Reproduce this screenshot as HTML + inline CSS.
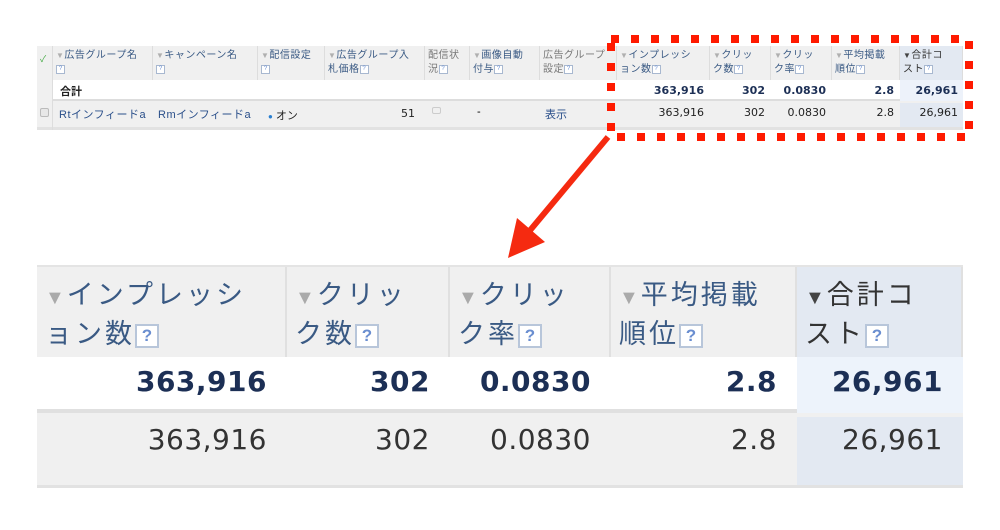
<!DOCTYPE html>
<html><head><meta charset="utf-8"><style>
*{margin:0;padding:0;box-sizing:border-box}
body{width:1000px;height:530px;background:#fff;position:relative;overflow:hidden;font-family:"Liberation Sans","Noto Sans CJK JP",sans-serif}
.a{position:absolute}
.h{background:#f0f0f0;border-right:1px solid #ddd;color:#3a5a84;font-size:10px;line-height:14px;padding:3px 3px;overflow:hidden;white-space:nowrap;letter-spacing:0.5px}
.q{display:inline-block;width:9px;height:9px;border:1px solid #a8b8d0;background:#fff;color:#6a8ed0;font-size:6px;line-height:7px;text-align:center;vertical-align:middle;letter-spacing:0}
.tri{color:#b0b0b0;font-size:8px}
.n{text-align:right;color:#222;font-family:"DejaVu Sans",sans-serif;font-size:11px}
.b{font-weight:bold;color:#1c2f55}
.H{background:#f0f0f0;border-right:2px solid #e0e0e0;color:#3a5a84;font-size:27px;line-height:36px;padding:10px 8px;letter-spacing:3px;white-space:nowrap}
.Q{display:inline-block;width:24px;height:24px;border:2px solid #b8c6da;background:#fff;color:#6a8ed0;font-size:17px;line-height:20px;text-align:center;vertical-align:middle;font-weight:bold;letter-spacing:0}
.TRI{color:#aaa;font-size:20px;letter-spacing:2px}
.N{text-align:right;font-size:28px;color:#333;padding-right:20px;font-family:"DejaVu Sans",sans-serif;letter-spacing:0.5px}
.N.b{font-size:28px;letter-spacing:0.5px;color:#1c2f55}
</style></head><body>
<!-- small table -->
<div class="a" style="left:37px;top:46px;width:926px;height:84px;background:#f0f0f0;border-bottom:3px solid #e2e2e2"></div>
<div class="a" style="left:53px;top:80px;width:910px;height:21px;background:#fff;border-bottom:2px solid #ddd"></div>
<div class="a" style="left:37px;top:46px;width:16px;height:84px;border-right:1px solid #ddd"></div>
<div class="a" style="left:40px;top:52px;color:#4a4;font-size:9px">✓</div>
<div class="a" style="left:40px;top:108px;width:9px;height:9px;border:1px solid #bbb;border-radius:2px;background:#e8e8e8"></div>
<div class="a h" style="left:53px;top:46px;width:100px;height:34px"><span class="tri">▼</span>広告グループ名<br><span class="q">?</span></div>
<div class="a h" style="left:153px;top:46px;width:105px;height:34px"><span class="tri">▼</span>キャンペーン名<br><span class="q">?</span></div>
<div class="a h" style="left:258px;top:46px;width:67px;height:34px"><span class="tri">▼</span>配信設定<br><span class="q">?</span></div>
<div class="a h" style="left:325px;top:46px;width:100px;height:34px"><span class="tri">▼</span>広告グループ入<br>札価格<span class="q">?</span></div>
<div class="a h" style="left:425px;top:46px;width:45px;height:34px;color:#777">配信状<br>況<span class="q">?</span></div>
<div class="a h" style="left:470px;top:46px;width:70px;height:34px"><span class="tri">▼</span>画像自動<br>付与<span class="q">?</span></div>
<div class="a h" style="left:540px;top:46px;width:77px;height:34px;color:#777">広告グループ<br>設定<span class="q">?</span></div>
<div class="a h" style="left:617px;top:46px;width:93px;height:34px"><span class="tri">▼</span>インプレッシ<br>ョン数<span class="q">?</span></div>
<div class="a h" style="left:710px;top:46px;width:61px;height:34px"><span class="tri">▼</span>クリッ<br>ク数<span class="q">?</span></div>
<div class="a h" style="left:771px;top:46px;width:61px;height:34px"><span class="tri">▼</span>クリッ<br>ク率<span class="q">?</span></div>
<div class="a h" style="left:832px;top:46px;width:68px;height:34px"><span class="tri">▼</span>平均掲載<br>順位<span class="q">?</span></div>
<div class="a h" style="left:900px;top:46px;width:63px;height:34px;background:#e3e9f2;color:#333"><span style="font-size:8px;color:#444">▼</span>合計コ<br>スト<span class="q">?</span></div>
<div class="a" style="left:900px;top:80px;width:63px;height:21px;background:#edf2fa"></div>
<div class="a" style="left:900px;top:103px;width:63px;height:24px;background:#e3e9f2"></div>
<div class="a" style="left:60px;top:83px;font-size:11px;font-weight:bold;color:#222">合計</div>
<div class="a" style="left:59px;top:106px;font-size:11px;color:#2a4f8a;letter-spacing:0.5px">Rtインフィードa</div>
<div class="a" style="left:158px;top:106px;font-size:11px;color:#2a4f8a;letter-spacing:0.5px">Rmインフィードa</div>
<div class="a" style="left:268px;top:107px;font-size:11px;color:#222"><span style="color:#2a7fd0;font-size:8px">●</span> オン</div>
<div class="a n" style="left:325px;top:107px;width:90px">51</div>
<div class="a" style="left:432px;top:107px;width:9px;height:7px;border:1px solid #ccc;border-radius:2px"></div>
<div class="a" style="left:477px;top:106px;font-size:11px">-</div>
<div class="a" style="left:545px;top:106px;font-size:11px;color:#2a4f8a">表示</div>
<div class="a n b" style="left:617px;top:84px;width:87px">363,916</div>
<div class="a n b" style="left:710px;top:84px;width:55px">302</div>
<div class="a n b" style="left:771px;top:84px;width:55px">0.0830</div>
<div class="a n b" style="left:832px;top:84px;width:62px">2.8</div>
<div class="a n b" style="left:900px;top:84px;width:58px">26,961</div>
<div class="a n" style="left:617px;top:106px;width:87px">363,916</div>
<div class="a n" style="left:710px;top:106px;width:55px">302</div>
<div class="a n" style="left:771px;top:106px;width:55px">0.0830</div>
<div class="a n" style="left:832px;top:106px;width:62px">2.8</div>
<div class="a n" style="left:900px;top:106px;width:58px">26,961</div>

<!-- big table -->
<div class="a" style="left:37px;top:265px;width:926px;height:223px;background:#f0f0f0;border-top:2px solid #e4e4e4;border-bottom:3px solid #e2e2e2"></div>
<div class="a" style="left:37px;top:357px;width:926px;height:56px;background:#fff;border-bottom:4px solid #e0e0e0"></div>
<div class="a H" style="left:37px;top:267px;width:250px;height:90px"><span class="TRI">▼</span>インプレッシ<br>ョン数<span class="Q">?</span></div>
<div class="a H" style="left:287px;top:267px;width:163px;height:90px"><span class="TRI">▼</span>クリッ<br>ク数<span class="Q">?</span></div>
<div class="a H" style="left:450px;top:267px;width:161px;height:90px"><span class="TRI">▼</span>クリッ<br>ク率<span class="Q">?</span></div>
<div class="a H" style="left:611px;top:267px;width:186px;height:90px"><span class="TRI">▼</span>平均掲載<br>順位<span class="Q">?</span></div>
<div class="a H" style="left:797px;top:267px;width:166px;height:90px;background:#e3e9f2;color:#333"><span class="TRI" style="color:#444">▼</span>合計コ<br>スト<span class="Q">?</span></div>
<div class="a" style="left:797px;top:357px;width:166px;height:56px;background:#edf3fb"></div>
<div class="a" style="left:797px;top:417px;width:166px;height:68px;background:#e3e9f2"></div>
<div class="a N b" style="left:37px;top:365px;width:250px">363,916</div>
<div class="a N b" style="left:287px;top:365px;width:163px">302</div>
<div class="a N b" style="left:450px;top:365px;width:161px">0.0830</div>
<div class="a N b" style="left:611px;top:365px;width:186px">2.8</div>
<div class="a N b" style="left:797px;top:365px;width:166px">26,961</div>
<div class="a N" style="left:37px;top:423px;width:250px">363,916</div>
<div class="a N" style="left:287px;top:423px;width:163px">302</div>
<div class="a N" style="left:450px;top:423px;width:161px">0.0830</div>
<div class="a N" style="left:611px;top:423px;width:186px">2.8</div>
<div class="a N" style="left:797px;top:423px;width:166px">26,961</div>

<svg class="a" style="left:0;top:0" width="1000" height="530">
<rect x="611" y="39" width="358" height="98" fill="none" stroke="#ff1a00" stroke-width="8" stroke-dasharray="8 12"/>
<line x1="608" y1="137" x2="527" y2="234" stroke="#f52a10" stroke-width="6"/>
<polygon points="508,258 517,218 545,242" fill="#f52a10"/>
</svg>
</body></html>
